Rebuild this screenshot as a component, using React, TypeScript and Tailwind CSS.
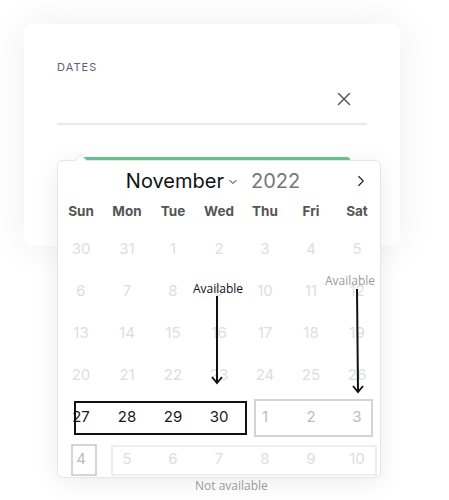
import { X, ChevronDown, ChevronRight } from "lucide-react";

const weekDays = ["Sun", "Mon", "Tue", "Wed", "Thu", "Fri", "Sat"];

const weeks = [
  [30, 31, 1, 2, 3, 4, 5],
  [6, 7, 8, 9, 10, 11, 12],
  [13, 14, 15, 16, 17, 18, 19],
  [20, 21, 22, 23, 24, 25, 26],
  [27, 28, 29, 30, 1, 2, 3],
  [4, 5, 6, 7, 8, 9, 10],
];

function dayColor(row: number, col: number) {
  if (row === 4) return col < 4 ? "text-[#1a1a1a]" : "text-[#bdbdbd]";
  if (row === 5 && col === 0) return "text-[#bdbdbd]";
  return "text-[#dedede]";
}

function Arrow({ x, y1, y2, x2 }: { x: number; y1: number; y2: number; x2?: number }) {
  const xe = x2 ?? x;
  return (
    <svg className="absolute left-0 top-0 pointer-events-none" width="449" height="500">
      <line x1={x} y1={y1} x2={xe} y2={y2} stroke="#111" strokeWidth="2" />
      <path d={`M${xe - 5} ${y2 - 6} L${xe} ${y2} L${xe + 5} ${y2 - 6}`} fill="none" stroke="#111" strokeWidth="1.8" />
    </svg>
  );
}

export default function App() {
  return (
    <main className="relative w-[449px] h-[500px] bg-white overflow-hidden font-['Inter',sans-serif]">
      <div className="pt-6 pl-6">
        {/* Dates card */}
        <div className="w-[376px] h-[222px] rounded-lg bg-white shadow-[0_0_40px_rgba(0,0,0,0.07)] pl-[33px] pt-[35px]">
          <p className="text-[11px] tracking-[0.1em] text-[#5b6276] leading-4">DATES</p>
          <div className="w-[310px] h-[50px] border-b-2 border-[#e8e9eb] flex items-center justify-end pr-[12px]">
            <X className="w-[22px] h-[22px] text-[#555]" strokeWidth={1.5} />
          </div>
          <div className="ml-[23px] mt-[32px] w-[270px] h-[3px] rounded-t bg-[#6cc48f]" />
        </div>
      </div>

      {/* Calendar popup */}
      <div className="absolute left-[57px] top-[160px] w-[324px] h-[318px] bg-white rounded-md border border-[#e6e6e6] shadow-[0_4px_24px_rgba(0,0,0,0.08)]">
        <div className="absolute -top-[5px] left-[18px] w-[9px] h-[9px] rotate-45 bg-white border-l border-t border-[#e6e6e6]" />
        <div className="relative h-10 flex items-center justify-center">
          <span className="text-[20px] text-[#111] ml-[-12px]">November</span>
          <ChevronDown className="w-[12px] h-[12px] text-[#222] ml-[3px] mt-[2px]" strokeWidth={2} />
          <span className="text-[20px] text-[#777] ml-[12px]">2022</span>
          <ChevronRight className="absolute right-[10px] top-[11px] w-[18px] h-[18px] text-[#222]" strokeWidth={1.5} />
        </div>
        <div className="grid grid-cols-7 h-5 items-center">
          {weekDays.map((d) => (
            <span key={d} className="text-center text-[13.5px] font-bold text-[#555]">{d}</span>
          ))}
        </div>
        <div className="mt-[7px]">
          {weeks.map((week, r) => (
            <div key={r} className="grid grid-cols-7 h-[42px] items-center">
              {week.map((day, c) => (
                <span key={c} className={`text-center text-[15px] ${dayColor(r, c)}`}>{day}</span>
              ))}
            </div>
          ))}
        </div>

        {/* annotation boxes */}
        <div className="absolute left-[16px] top-[240px] w-[173px] h-[34px] border-2 border-[#111]" />
        <div className="absolute left-[196px] top-[238px] w-[119px] h-[38px] border-2 border-[#d4d4d4]" />
        <div className="absolute left-[13px] top-[283px] w-[26px] h-[32px] border-2 border-[#d4d4d4]" />
        <div className="absolute left-[53px] top-[284px] w-[266px] h-[31px] border-2 border-[#eeeeee]" />
      </div>

      {/* annotations */}
      <span className="absolute left-[193px] top-[280px] text-[12px] text-[#111] font-['Open_Sans',sans-serif]">Available</span>
      <Arrow x={217} y1={296} y2={383} />
      <span className="absolute left-[325px] top-[272px] text-[12px] text-[#9a9a9a] font-['Open_Sans',sans-serif]">Available</span>
      <Arrow x={357} y1={289} y2={392} x2={358} />
      <span className="absolute left-[195px] top-[477px] text-[12px] text-[#9a9a9a] font-['Open_Sans',sans-serif]">Not available</span>
    </main>
  );
}
